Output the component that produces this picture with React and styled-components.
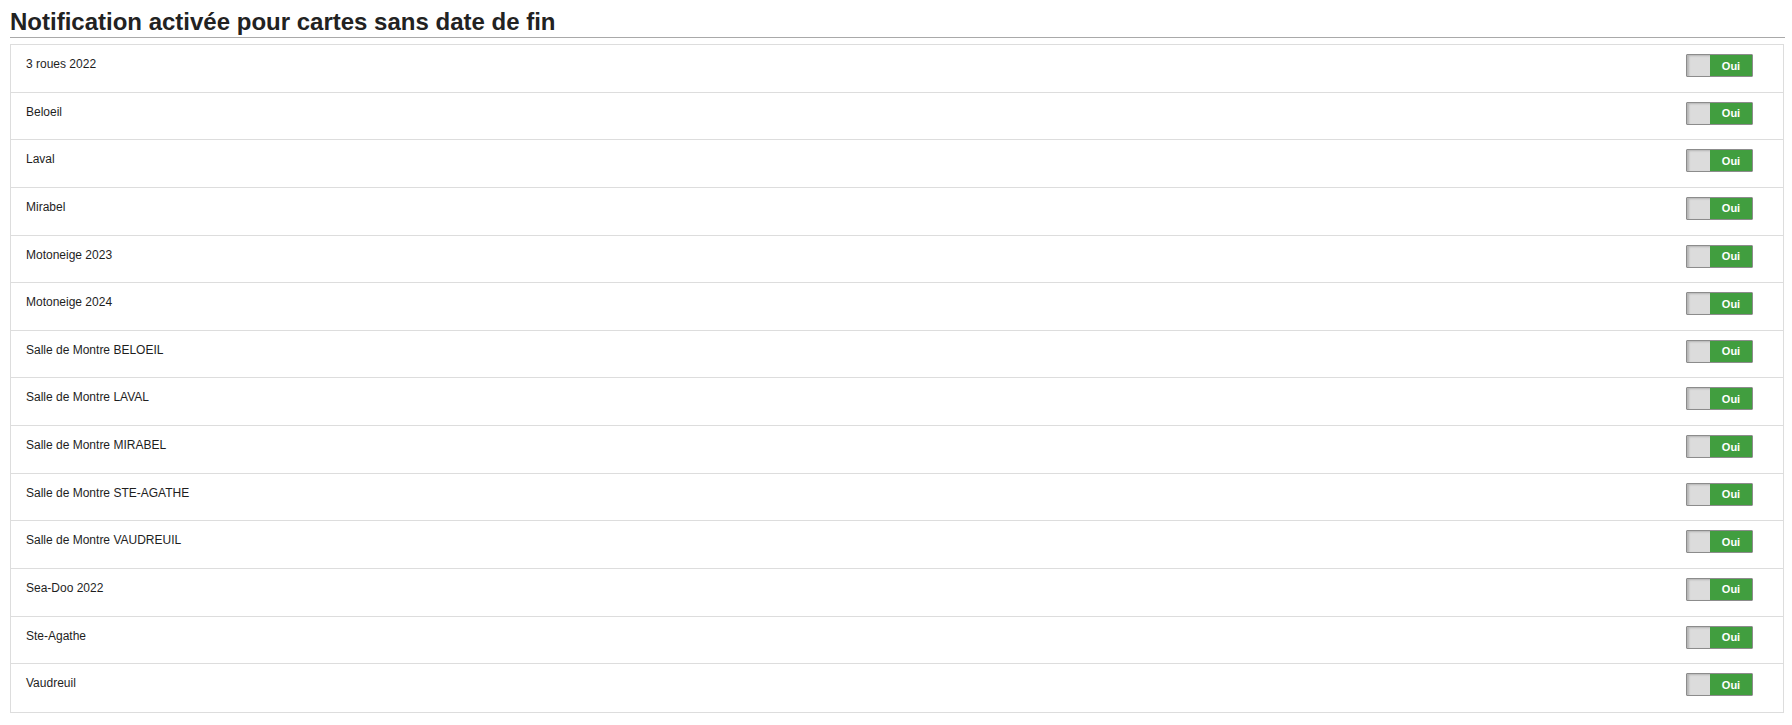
import React from "react";
import styled, { createGlobalStyle } from "styled-components";

const GlobalStyle = createGlobalStyle`
    html, body {
        margin: 0;
        padding: 0;
        background: #ffffff;
    }
    body {
        font-family: "Liberation Sans", Arial, Helvetica, sans-serif;
        color: #222222;
    }
`;

const Page = styled.div`
    padding: 9px 7px 0 10px;
`;

const Title = styled.h1`
    margin: 0;
    padding: 0 0 2px 0;
    font-size: 24px;
    line-height: 26px;
    font-weight: 700;
    color: #222222;
    border-bottom: 1px solid #a9a9a9;
`;

const List = styled.div`
    margin-top: 6px;
    margin-right: 1px;
    border: 1px solid #dddddd;
    display: flex;
    flex-direction: column;
`;

const Row = styled.div`
    box-sizing: border-box;
    height: 47.64px;
    display: flex;
    justify-content: space-between;
    align-items: flex-start;
    padding: 9px 30px 0 15px;
    border-bottom: ${({ $last }) => ($last ? "none" : "1px solid #dddddd")};
`;

const Label = styled.span`
    margin-top: 1px;
    font-size: 12px;
    line-height: 18px;
    color: #1e1e1e;
`;

const Switch = styled.div`
    box-sizing: border-box;
    width: 67px;
    height: 23px;
    display: flex;
    border: 1px solid #8c8c8c;
    border-radius: 1px;
    overflow: hidden;
`;

const Knob = styled.div`
    width: 23px;
    background: #dcdcdc;
    box-shadow: inset 2px 1px 2px rgba(0, 0, 0, 0.18);
`;

const OnLabel = styled.div`
    flex: 1;
    display: flex;
    align-items: center;
    justify-content: center;
    background: #419e3f;
    color: #ffffff;
    font-size: 11px;
    font-weight: 700;
`;

const items = [
    "3 roues 2022",
    "Beloeil",
    "Laval",
    "Mirabel",
    "Motoneige 2023",
    "Motoneige 2024",
    "Salle de Montre BELOEIL",
    "Salle de Montre LAVAL",
    "Salle de Montre MIRABEL",
    "Salle de Montre STE-AGATHE",
    "Salle de Montre VAUDREUIL",
    "Sea-Doo 2022",
    "Ste-Agathe",
    "Vaudreuil",
];

export default function App() {
    return (
        <>
            <GlobalStyle />
            <Page>
                <Title>Notification activée pour cartes sans date de fin</Title>
                <List>
                    {items.map((name, i) => (
                        <Row key={name} $last={i === items.length - 1}>
                            <Label>{name}</Label>
                            <Switch>
                                <Knob />
                                <OnLabel>Oui</OnLabel>
                            </Switch>
                        </Row>
                    ))}
                </List>
            </Page>
        </>
    );
}
